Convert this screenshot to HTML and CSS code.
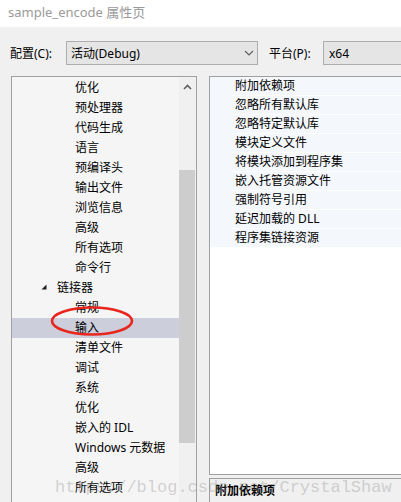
FILE: index.html
```html
<!DOCTYPE html>
<html>
<head>
<meta charset="utf-8">
<link rel="stylesheet" href="styles.css">
</head>
<body>
<div class="page">
  <div class="titlebar">sample_encode 属性页</div>
  <div class="toolbar">
    <span class="label">配置(C):</span>
    <div class="combo combo-config">
      <span>活动(Debug)</span>
      <svg class="chev" width="10" height="6" viewBox="0 0 10 6"><path d="M1 1 L5 5 L9 1" fill="none" stroke="#606060" stroke-width="1.2"/></svg>
    </div>
    <span class="label label-plat">平台(P):</span>
    <div class="combo combo-plat"><span>x64</span></div>
  </div>
  <div class="main">
    <div class="tree-panel">
      <ul class="tree">
        <li class="leaf">优化</li>
        <li class="leaf">预处理器</li>
        <li class="leaf">代码生成</li>
        <li class="leaf">语言</li>
        <li class="leaf">预编译头</li>
        <li class="leaf">输出文件</li>
        <li class="leaf">浏览信息</li>
        <li class="leaf">高级</li>
        <li class="leaf">所有选项</li>
        <li class="leaf">命令行</li>
        <li class="node"><svg class="expander" width="6" height="6" viewBox="0 0 6 6"><polygon points="5.5,0.5 5.5,5.5 0.5,5.5" fill="#1e1e1e"/></svg>链接器</li>
        <li class="leaf">常规</li>
        <li class="leaf selected">输入</li>
        <li class="leaf">清单文件</li>
        <li class="leaf">调试</li>
        <li class="leaf">系统</li>
        <li class="leaf">优化</li>
        <li class="leaf">嵌入的 IDL</li>
        <li class="leaf">Windows 元数据</li>
        <li class="leaf">高级</li>
        <li class="leaf">所有选项</li>
      </ul>
      <div class="scrollbar">
        <div class="arrow"><svg width="9" height="6" viewBox="0 0 9 6"><path d="M1 5 L4.5 1.5 L8 5" fill="none" stroke="#606060" stroke-width="1.6"/></svg></div>
        <div class="thumb"></div>
      </div>
    </div>
    <div class="right-col">
      <div class="grid-panel">
        <div class="grid">
          <div class="gutter"></div>
          <div class="rows">
            <div class="row">附加依赖项</div>
            <div class="row">忽略所有默认库</div>
            <div class="row">忽略特定默认库</div>
            <div class="row">模块定义文件</div>
            <div class="row">将模块添加到程序集</div>
            <div class="row">嵌入托管资源文件</div>
            <div class="row">强制符号引用</div>
            <div class="row">延迟加载的 DLL</div>
            <div class="row">程序集链接资源</div>
          </div>
        </div>
      </div>
      <div class="desc"><b>附加依赖项</b></div>
    </div>
  </div>
  <svg class="circle" width="90" height="34" viewBox="0 0 90 34"><ellipse cx="45" cy="16" rx="40" ry="13.5" fill="none" stroke="#e8261e" stroke-width="2.6"/></svg>
  <div class="watermark">https://blog.csdn.net/CrystalShaw</div>
</div>
</body>
</html>
```
FILE: styles.css
```css
html, body {
  margin: 0;
  padding: 0;
}
body {
  width: 401px;
  height: 502px;
  overflow: hidden;
  background: #f0f0f0;
  font-family: "Noto Sans", "Noto Sans CJK SC", sans-serif;
  font-size: 12px;
  color: #000000;
}
.page {
  position: relative;
  width: 401px;
  height: 502px;
  overflow: hidden;
}
.titlebar {
  height: 27px;
  line-height: 25px;
  background: #ffffff;
  color: #9a9a9a;
  font-size: 13px;
  padding-left: 8px;
}
.toolbar {
  display: flex;
  align-items: center;
  margin-top: 14px;
  height: 24px;
}
.label {
  margin-left: 10px;
  width: 56px;
}
.label-plat {
  margin-left: 11px;
  width: 54px;
}
.combo {
  box-sizing: border-box;
  height: 24px;
  border: 1px solid #adadad;
  background: #e5e5e5;
  display: flex;
  align-items: center;
  padding-left: 4px;
}
.combo-config {
  width: 192px;
  justify-content: space-between;
  padding-right: 3px;
}
.combo-plat {
  flex: 1;
  margin-right: -10px;
  padding-left: 5px;
}
.main {
  display: flex;
  margin-top: 11px;
  gap: 12px;
  height: 426px;
}
.tree-panel {
  margin-left: 11px;
  width: 186px;
  box-sizing: border-box;
  border: 1px solid #a0a0a0;
  border-bottom: none;
  background: #f5f5f5;
  display: flex;
}
.tree {
  list-style: none;
  margin: 0;
  padding: 1px 0 0 0;
  flex: 1;
}
.tree li {
  height: 20px;
  line-height: 20px;
  white-space: nowrap;
}
.leaf {
  padding-left: 63px;
}
.node {
  padding-left: 29px;
  display: flex;
  align-items: center;
}
.expander {
  margin-right: 10px;
  margin-top: -2px;
}
.selected {
  background: #cccedb;
}
.scrollbar {
  width: 17px;
  background: #f0f0f0;
  display: flex;
  flex-direction: column;
  align-items: stretch;
}
.arrow {
  height: 19px;
  display: flex;
  justify-content: center;
  align-items: center;
}
.thumb {
  margin-top: 74px;
  margin-right: 1px;
  height: 273px;
  background: #cdcdcd;
}
.right-col {
  flex: 1;
  margin-right: -10px;
  display: flex;
  flex-direction: column;
  gap: 3px;
}
.grid-panel {
  box-sizing: border-box;
  height: 399px;
  border: 1px solid #a0a0a0;
  background: #ffffff;
}
.grid {
  display: flex;
}
.gutter {
  width: 21px;
  background: #f4f7fb;
}
.rows {
  flex: 1;
  display: flex;
  flex-direction: column;
  gap: 1px;
}
.row {
  height: 18px;
  line-height: 18px;
  background: #f4f7fb;
  padding-left: 4px;
  white-space: nowrap;
}
.desc {
  flex: 1;
  box-sizing: border-box;
  border: 1px solid #a0a0a0;
  border-bottom: none;
  padding: 3px 0 0 5px;
  line-height: 18px;
}
.desc b {
  font-weight: bold;
}
.circle {
  position: absolute;
  left: 47px;
  top: 305px;
}
.watermark {
  position: absolute;
  left: 55px;
  top: 477px;
  font-family: "Liberation Mono", monospace;
  font-size: 17px;
  line-height: 22px;
  color: rgba(150, 150, 150, 0.4);
  white-space: nowrap;
}
```
